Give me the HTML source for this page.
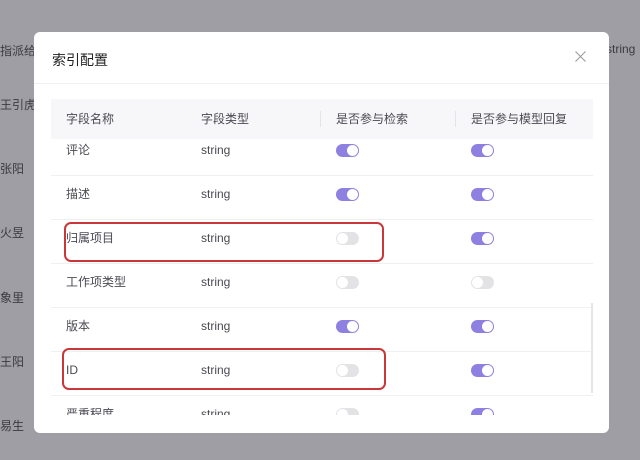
<!DOCTYPE html><html><head><meta charset="utf-8"><style>
*{margin:0;padding:0;box-sizing:border-box}
body{width:640px;height:460px;overflow:hidden;background:#9e9ea4;font-family:"Liberation Sans","Noto Sans CJK SC",sans-serif;position:relative;font-size:12px;color:#4a4a52}
.bg{position:absolute;left:0;color:#3a3a40;font-size:12px}
.m{position:absolute;left:34px;top:32px;width:575px;height:401px;background:#fff;border-radius:6px;overflow:hidden}
.t{position:absolute;left:18px;top:18px;font-size:14px;color:#222}
.x{position:absolute;left:541px;top:19px}
.hr{position:absolute;left:0;right:0;top:51px;height:1px;background:#f0f0f2}
.th{position:absolute;left:17px;top:67px;width:542px;height:40px;background:#f7f7f9}
.th span,.r span{position:absolute;top:0;line-height:40px}
.sep{position:absolute;top:12px;width:1px;height:16px;background:#e4e4e8}
.body{position:absolute;left:17px;top:107px;width:542px;height:276px;overflow:hidden}
.r{position:absolute;left:0;width:542px;height:44px;border-bottom:1px solid #f0f0f2}
.r span{line-height:24px;top:6px}
.tg{position:absolute;width:23px;height:13px;border-radius:7px;background:#8e80e0;top:12px}
.tg::after{content:"";position:absolute;right:1px;top:1px;width:11px;height:11px;border-radius:50%;background:#fff}
.tg.off{background:#e3e3e6}.tg.off::after{right:auto;left:1px}
.red{position:absolute;border:2px solid #c8383a;border-radius:7px}
</style></head><body>
<div class="bg" style="top:42px">指派给</div><div class="bg" style="top:96px">王引虎</div><div class="bg" style="top:160px">张阳</div><div class="bg" style="top:224px">火昱</div><div class="bg" style="top:289px">象里</div><div class="bg" style="top:353px">王阳</div><div class="bg" style="top:417px">易生</div>
<div class="bg" style="left:606px;top:42px">string</div>
<div class="m">
<div class="t">索引配置</div><svg class="x" width="11" height="11" viewBox="0 0 11 11"><path d="M0.5 0.5L10.5 10.5M10.5 0.5L0.5 10.5" stroke="#9a9aa0" stroke-width="1.1"/></svg><div class="hr"></div>
<div class="th"><span style="left:15px">字段名称</span><span style="left:150px">字段类型</span><div class="sep" style="left:269px"></div><span style="left:285px">是否参与检索</span><div class="sep" style="left:404px"></div><span style="left:420px">是否参与模型回复</span></div>
<div class="body">
<div class="r" style="top:-7px"><span style="left:15px">评论</span><span style="left:150px">string</span><div class="tg" style="left:285px"></div><div class="tg" style="left:420px"></div></div>
<div class="r" style="top:37px"><span style="left:15px">描述</span><span style="left:150px">string</span><div class="tg" style="left:285px"></div><div class="tg" style="left:420px"></div></div>
<div class="r" style="top:81px"><span style="left:15px">归属项目</span><span style="left:150px">string</span><div class="tg off" style="left:285px"></div><div class="tg" style="left:420px"></div></div>
<div class="r" style="top:125px"><span style="left:15px">工作项类型</span><span style="left:150px">string</span><div class="tg off" style="left:285px"></div><div class="tg off" style="left:420px"></div></div>
<div class="r" style="top:169px"><span style="left:15px">版本</span><span style="left:150px">string</span><div class="tg" style="left:285px"></div><div class="tg" style="left:420px"></div></div>
<div class="r" style="top:213px"><span style="left:15px">ID</span><span style="left:150px">string</span><div class="tg off" style="left:285px"></div><div class="tg" style="left:420px"></div></div>
<div class="r" style="top:257px"><span style="left:15px">严重程度</span><span style="left:150px">string</span><div class="tg off" style="left:285px"></div><div class="tg" style="left:420px"></div></div>
</div>
<div style="position:absolute;left:557px;top:271px;width:2px;height:90px;background:#e6e6ea"></div>
</div>
<div class="red" style="left:64px;top:222px;width:320px;height:40px"></div>
<div class="red" style="left:62px;top:348px;width:324px;height:42px"></div>
</body></html>
